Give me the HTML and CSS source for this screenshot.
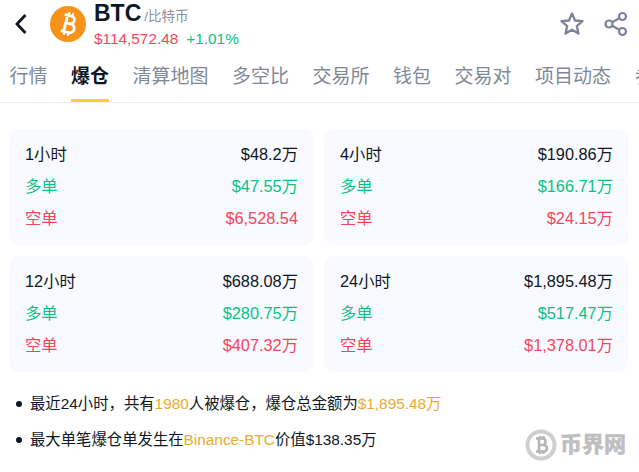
FILE: index.html
```html
<!DOCTYPE html>
<html lang="zh">
<head>
  <meta charset="UTF-8">
  <meta name="viewport" content="width=device-width, initial-scale=1">
  <title>BTC 爆仓</title>
  <link rel="stylesheet" href="styles.css">
</head>
<body>
  <header class="head">
    <svg class="back" width="14" height="22" viewBox="0 0 14 22"><path d="M11.500 2 3 11l8.500 9" fill="none" stroke="#0e1726" stroke-width="2.800"/></svg>
    <svg class="logo" width="36" height="36" viewBox="0 0 36 36">
      <circle cx="18" cy="18" r="18" fill="#f7931a"/>
      <g transform="rotate(14 18 18)" fill="none" stroke="#fff">
        <path d="M12.500 9.500h7c5 0 5 7.600 0 7.800h-4m0 0h5.500c5.500 0 5.500 8.700 0 8.900h-8.500M15.500 9.500v16.500" stroke-width="2.800"/>
        <path d="M16.500 6v3.500M20.500 6v3.500M16.500 26v3.500M20.500 26v3.500" stroke-width="2"/>
      </g>
    </svg>
    <div class="coin">
      <div class="coin-name"><b>BTC</b><span>/比特币</span></div>
      <div class="coin-price"><span class="red">$114,572.48</span><span class="green">+1.01%</span></div>
    </div>
    <div class="actions">
      <svg width="26" height="26" viewBox="0 0 26 26"><path d="M13 2.500l3 7 7.500.7-5.700 5 1.700 7.400-6.500-3.900-6.500 3.900 1.700-7.400-5.700-5 7.500-.7z" fill="none" stroke="#7a8499" stroke-width="2.300" stroke-linejoin="round"/></svg>
      <svg width="24" height="26" viewBox="0 0 24 26"><g fill="none" stroke="#7a8499" stroke-width="2.200"><circle cx="5" cy="13" r="3.500"/><circle cx="18.500" cy="5.500" r="3.500"/><circle cx="18.500" cy="20.500" r="3.500"/><path d="M8 11.200l7.500-4M8 14.800l7.500 4"/></g></svg>
    </div>
  </header>

  <nav class="tabs">
    <a>行情</a>
    <a class="active">爆仓</a>
    <a>清算地图</a>
    <a>多空比</a>
    <a>交易所</a>
    <a>钱包</a>
    <a>交易对</a>
    <a>项目动态</a>
    <a>参数</a>
  </nav>

  <div class="cards">
    <div class="card">
      <div class="row"><span>1小时</span><span>$48.2万</span></div>
      <div class="row green"><span>多单</span><span>$47.55万</span></div>
      <div class="row red"><span>空单</span><span>$6,528.54</span></div>
    </div>
    <div class="card">
      <div class="row"><span>4小时</span><span>$190.86万</span></div>
      <div class="row green"><span>多单</span><span>$166.71万</span></div>
      <div class="row red"><span>空单</span><span>$24.15万</span></div>
    </div>
    <div class="card">
      <div class="row"><span>12小时</span><span>$688.08万</span></div>
      <div class="row green"><span>多单</span><span>$280.75万</span></div>
      <div class="row red"><span>空单</span><span>$407.32万</span></div>
    </div>
    <div class="card">
      <div class="row"><span>24小时</span><span>$1,895.48万</span></div>
      <div class="row green"><span>多单</span><span>$517.47万</span></div>
      <div class="row red"><span>空单</span><span>$1,378.01万</span></div>
    </div>
  </div>

  <ul class="notes">
    <li>最近24小时，共有<em>1980</em>人被爆仓，爆仓总金额为<em>$1,895.48万</em></li>
    <li>最大单笔爆仓单发生在<em>Binance-BTC</em>价值$138.35万</li>
  </ul>

  <div class="mark">
    <svg width="32" height="32" viewBox="0 0 32 32">
      <circle cx="16" cy="16" r="13.500" fill="none" stroke="#cfcfcf" stroke-width="4"/>
      <path d="M11 9.500h6.500c4 0 4 6.500 0 6.500H13h5.500c4.500 0 4.500 6.500 0 6.500H11M14 9.500v13M15 7v3M18.500 7v3M15 22v3M18.500 22v3" fill="none" stroke="#b5b5b5" stroke-width="2.600"/>
    </svg>
    <span>币界网</span>
  </div>
</body>
</html>
```

FILE: styles.css
```css
body {
  margin: 0;
  width: 639px;
  height: 472px;
  overflow: hidden;
  position: relative;
  background: #fff;
  color: #0e1726;
  font-family: "Liberation Sans", "Noto Sans CJK SC", sans-serif;
}

.red {
  color: #f6455d;
}

.green {
  color: #0ac285;
}

.head {
  display: flex;
  align-items: flex-start;
  height: 54px;
  padding-left: 14px;
}

.back {
  margin-top: 13px;
  flex: none;
}

.logo {
  margin: 6px 8px 0 22px;
  flex: none;
}

.coin-name {
  display: flex;
  align-items: baseline;
  height: 27px;
  line-height: 27px;
}

.coin-name b {
  font-size: 23px;
}

.coin-name span {
  margin-left: 3px;
  font-size: 13.500px;
  color: #8a8f9c;
}

.coin-price {
  display: flex;
  gap: 8px;
  font-size: 15.360px;
  line-height: 24px;
}

.actions {
  display: flex;
  gap: 19px;
  margin-left: auto;
  margin-top: 11px;
  margin-right: 11px;
}

.tabs {
  display: flex;
  gap: 23.500px;
  height: 48px;
  padding-left: 9.500px;
  border-bottom: 1px solid #eeeff2;
  white-space: nowrap;
  font-size: 19px;
  line-height: 46px;
  color: #7f8899;
}

.tabs a {
  flex: none;
  height: 48px;
  box-sizing: border-box;
}

.tabs .active {
  color: #0e1726;
  font-weight: 700;
  border-bottom: 3px solid #fbcf35;
}

.cards {
  display: grid;
  grid-template-columns: 305px 305px;
  gap: 11px 10px;
  padding: 26px 0 0 9px;
}

.card {
  padding: 9px 16px 11px;
  background: #f9faff;
  border-radius: 10px;
}

.row {
  display: flex;
  justify-content: space-between;
  font-size: 16.320px;
  line-height: 32px;
}

.notes {
  margin: 14px 0 0;
  padding: 0 0 0 30px;
  list-style: none;
  font-size: 15.360px;
  line-height: 36px;
}

.notes li::before {
  content: "";
  display: inline-block;
  width: 6px;
  height: 6px;
  margin: 0 8px 2px -14px;
  border-radius: 50%;
  background: #0e1726;
  vertical-align: middle;
}

.notes em {
  font-style: normal;
  color: #e9ac2d;
}

.mark {
  position: absolute;
  left: 525px;
  top: 429px;
  display: flex;
  align-items: center;
  gap: 3px;
  color: #bebebe;
  font-weight: 700;
  line-height: 32px;
}

.mark span {
  font-size: 22px;
  -webkit-text-stroke: 0.6px #bebebe;
}
```
